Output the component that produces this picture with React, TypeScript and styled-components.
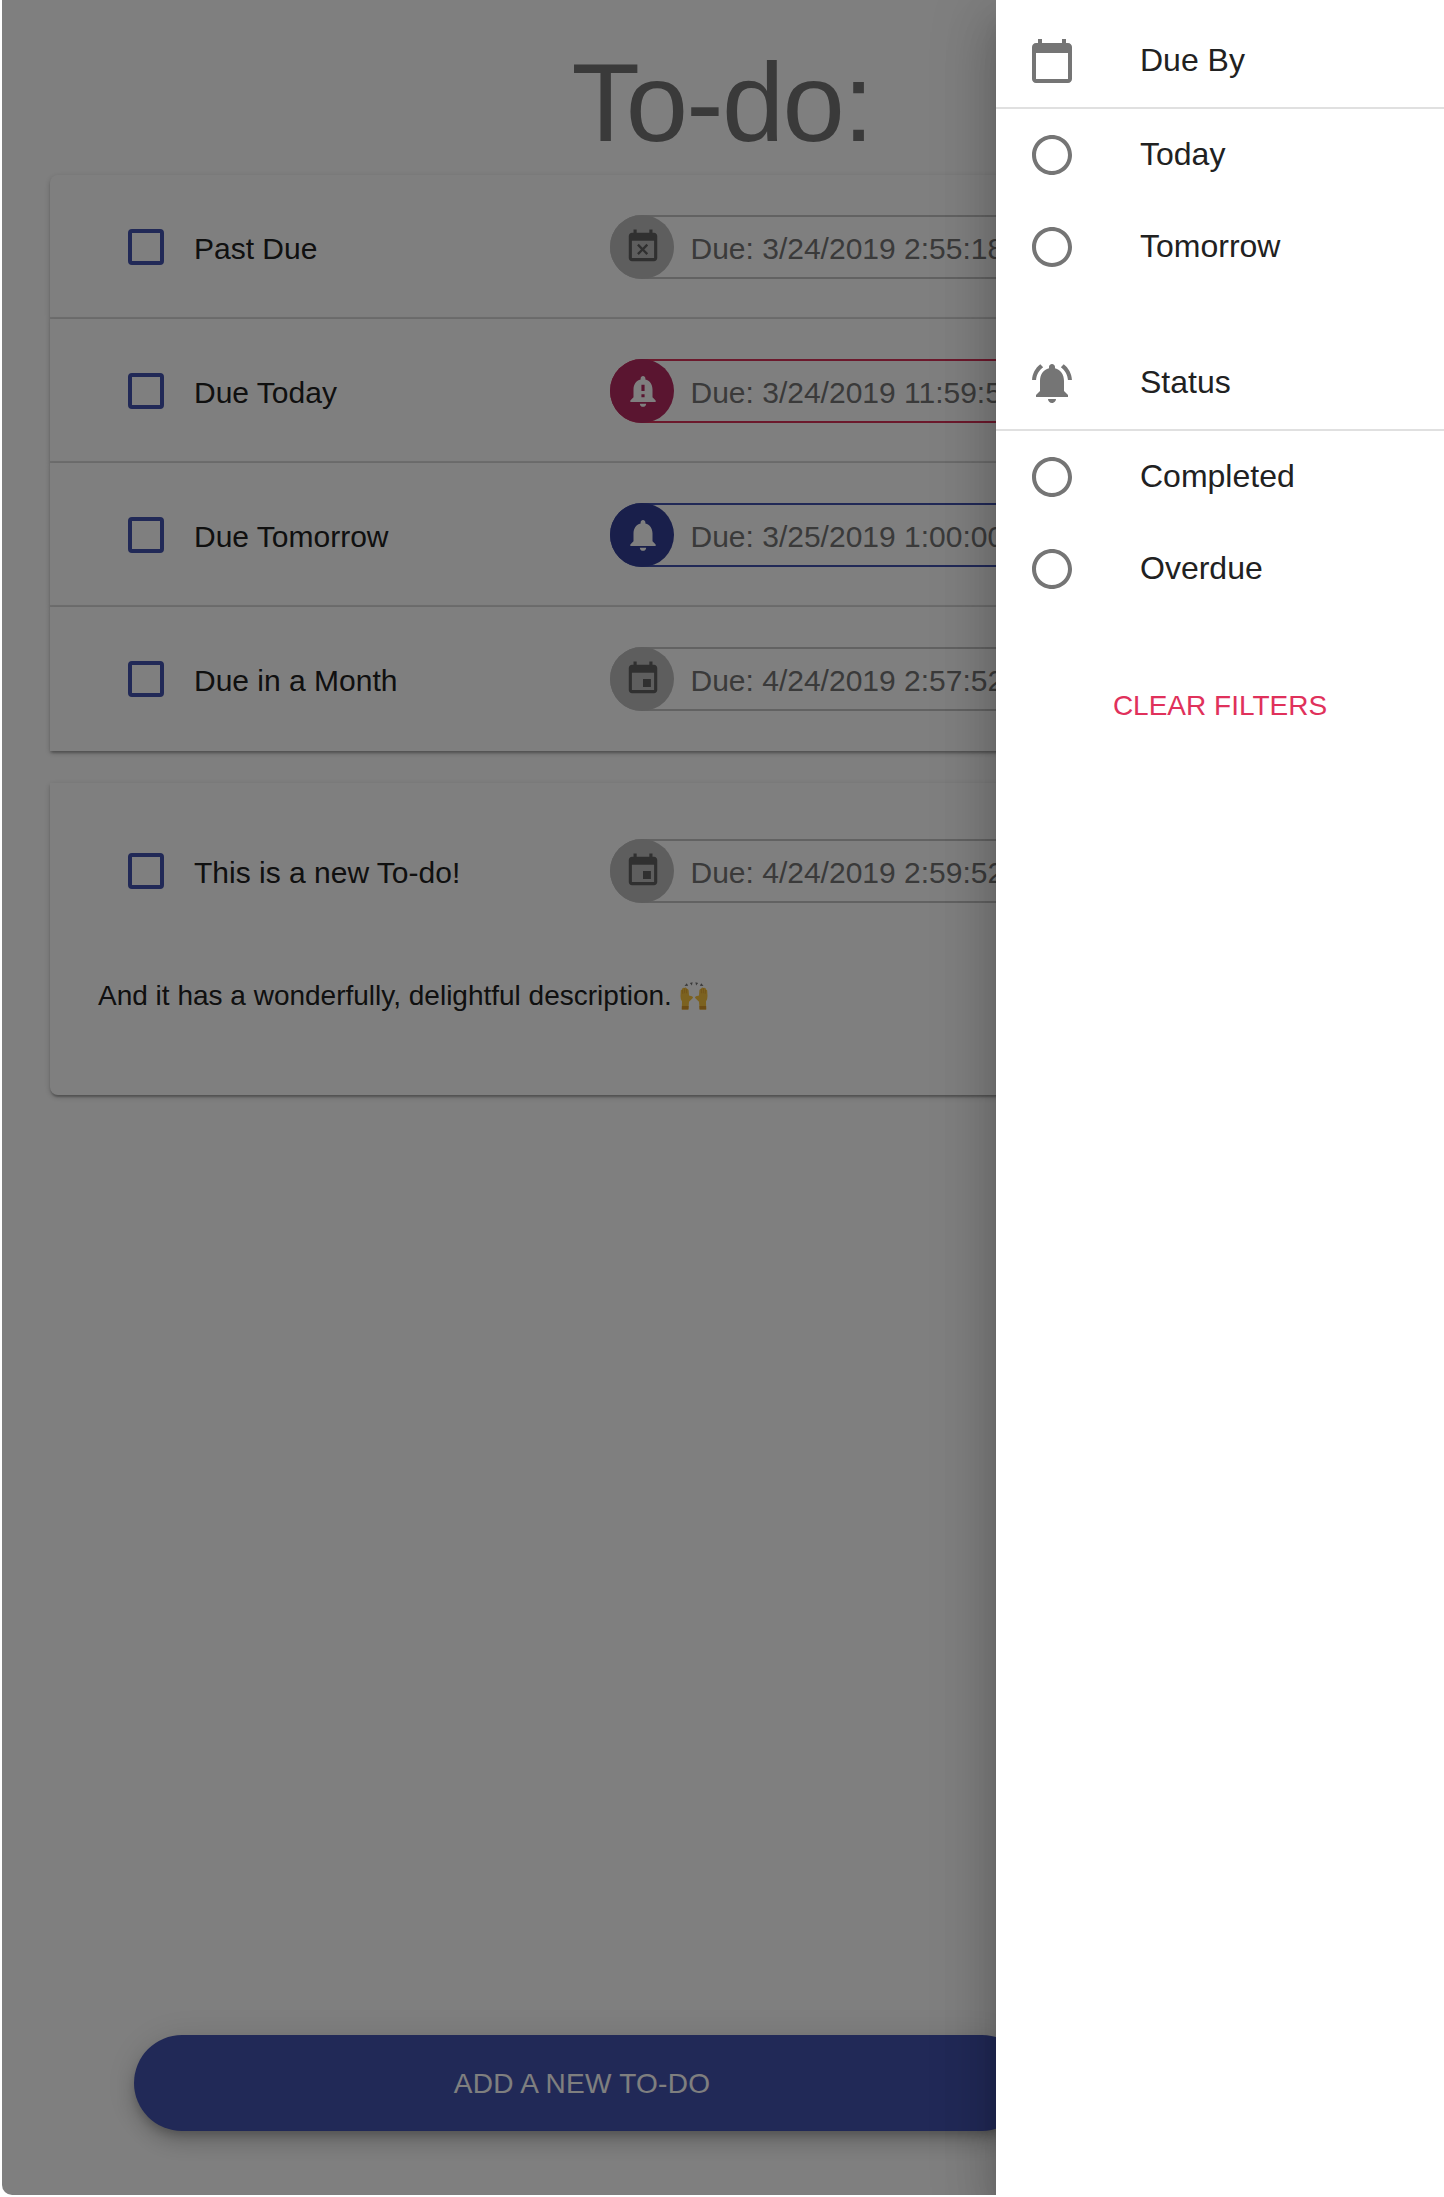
import React from 'react';
import styled, { createGlobalStyle } from 'styled-components';

const Global = createGlobalStyle`
  *, *::before, *::after { box-sizing: border-box; }
  body { margin: 0; background: #fff; font-family: "Liberation Sans", Arial, Helvetica, sans-serif; }
`;

const icons = {
  busy: 'M9.31 17l2.44-2.44L14.19 17l1.06-1.06-2.44-2.44 2.44-2.44L14.19 10l-2.44 2.44L9.31 10l-1.06 1.06 2.44 2.44-2.44 2.44L9.31 17zM19 3h-1V1h-2v2H8V1H6v2H5c-1.11 0-1.99.9-1.99 2L3 19c0 1.1.89 2 2 2h14c1.1 0 2-.9 2-2V5c0-1.1-.9-2-2-2zm0 16H5V8h14v11z',
  important: 'M18 16v-5c0-3.07-1.64-5.64-4.5-6.32V4c0-.83-.67-1.5-1.5-1.5s-1.5.67-1.5 1.5v.68C7.63 5.36 6 7.92 6 11v5l-2 2v1h16v-1l-2-2zm-5 0h-2v-2h2v2zm0-4h-2V8h2v4zm-1 10c1.1 0 2-.9 2-2h-4c0 1.1.89 2 2 2z',
  bell: 'M12 22c1.1 0 2-.9 2-2h-4c0 1.1.89 2 2 2zm6-6v-5c0-3.07-1.64-5.64-4.5-6.32V4c0-.83-.67-1.5-1.5-1.5s-1.5.67-1.5 1.5v.68C7.63 5.36 6 7.92 6 11v5l-2 2v1h16v-1l-2-2z',
  event: 'M17 12h-5v5h5v-5zM16 1v2H8V1H6v2H5c-1.11 0-1.99.9-1.99 2L3 19c0 1.1.89 2 2 2h14c1.1 0 2-.9 2-2V5c0-1.1-.9-2-2-2h-1V1h-2zm3 18H5V8h14v11z',
  calendar: 'M20 3h-1V1h-2v2H7V1H5v2H4c-1.1 0-2 .9-2 2v16c0 1.1.9 2 2 2h16c1.1 0 2-.9 2-2V5c0-1.1-.9-2-2-2zm0 18H4V8h16v13z',
  active: 'M7.58 4.08L6.15 2.65C3.75 4.48 2.17 7.3 2.03 10.5h2c.15-2.65 1.51-4.97 3.55-6.42zm12.39 6.42h2c-.15-3.2-1.73-6.02-4.12-7.85l-1.42 1.43c2.02 1.45 3.39 3.77 3.54 6.42zM18 11c0-3.07-1.64-5.64-4.5-6.32V4c0-.83-.67-1.5-1.5-1.5s-1.5.67-1.5 1.5v.68C7.63 5.36 6 7.92 6 11v5l-2 2v1h16v-1l-2-2v-5zm-6 11c.14 0 .27-.01.4-.04.65-.14 1.18-.58 1.44-1.18.1-.24.15-.5.15-.78h-4c.01 1.1.9 2 2.01 2z',
  radio: 'M12 2C6.48 2 2 6.48 2 12s4.48 10 10 10 10-4.48 10-10S17.52 2 12 2zm0 18c-4.42 0-8-3.58-8-8s3.58-8 8-8 8 3.58 8 8-3.58 8-8 8z',
};

const Icon = ({ name, size }: { name: keyof typeof icons; size: number }) => (
  <svg width={size} height={size} viewBox="0 0 24 24" fill="currentColor">
    <path d={icons[name]} />
  </svg>
);

const tones = {
  plain: { border: '#c4c4c4', avatar: '#bdbdbd', ink: '#616161' },
  urgent: { border: '#d93359', avatar: '#b42a60', ink: '#ffffff' },
  soon: { border: '#4252ae', avatar: '#333f96', ink: '#ffffff' },
};

const Viewport = styled.div`
  position: relative;
  width: 1444px;
  height: 2197px;
  overflow: hidden;
  display: flex;
`;

const Page = styled.main`
  flex: 1;
  margin: 0 2px 2px;
  padding: 0 48px 64px;
  display: flex;
  flex-direction: column;
  border-radius: 0 0 10px 10px;
`;

const Title = styled.h1`
  margin: 0;
  height: 175px;
  padding-top: 37px;
  font-size: 112px;
  font-weight: 400;
  line-height: 132px;
  letter-spacing: -1.7px;
  text-align: center;
  color: #757575;
`;

const List = styled.div`
  display: flex;
  flex-direction: column;
`;

const Panel = styled.section<{ $first?: boolean; $open?: boolean }>`
  background: #fff;
  margin-top: ${(p) => (p.$open ? 32 : 0)}px;
  border-radius: ${(p) => (p.$first ? '8px 8px 0 0' : p.$open ? '0 0 8px 8px' : '0')};
  box-shadow: 0 2px 6px rgba(0, 0, 0, 0.2), 0 2px 2px rgba(0, 0, 0, 0.14), 0 4px 2px -2px rgba(0, 0, 0, 0.12);
`;

const Summary = styled.div<{ $open?: boolean; $line: boolean }>`
  display: flex;
  align-items: center;
  height: ${(p) => (p.$open ? 176 : 144)}px;
  padding-left: 78px;
  border-bottom: 2px solid ${(p) => (p.$line ? '#dedede' : 'transparent')};
  padding-top: 2px;
`;

const Checkbox = styled.span`
  width: 36px;
  height: 36px;
  border: 4px solid #4252ae;
  border-radius: 4px;
`;

const Label = styled.span`
  width: 416px;
  margin: 4px 0 0 30px;
  font-size: 30px;
  line-height: 36px;
  color: #212121;
`;

const Chip = styled.div<{ $tone: keyof typeof tones }>`
  display: flex;
  align-items: center;
  height: 64px;
  width: 470px;
  border: 2px solid ${(p) => tones[p.$tone].border};
  border-radius: 32px;
`;

const Avatar = styled.span<{ $tone: keyof typeof tones }>`
  display: flex;
  align-items: center;
  justify-content: center;
  flex: none;
  width: 64px;
  height: 64px;
  margin-left: -2px;
  border-radius: 50%;
  background: ${(p) => tones[p.$tone].avatar};
  color: ${(p) => tones[p.$tone].ink};
  svg { margin-left: 1px; }
`;

const DueText = styled.span`
  margin: 4px 0 0 16.5px;
  font-size: 30px;
  line-height: 36px;
  white-space: nowrap;
  color: #757575;
`;

const Details = styled.div`
  display: flex;
  align-items: flex-start;
  height: 136px;
  padding: 17px 48px 47px;
`;

const Description = styled.p`
  display: flex;
  align-items: center;
  gap: 8px;
  margin: 0;
  font-size: 28px;
  line-height: 40px;
  color: #212121;
`;

const AddButton = styled.button`
  width: 896px;
  height: 96px;
  margin: auto 0 0 84px;
  border: 0;
  border-radius: 48px;
  background: #4252ae;
  color: #fff;
  font: 400 28px/49px "Liberation Sans", Arial, sans-serif;
  letter-spacing: 0.25px;
  text-transform: uppercase;
  box-shadow: 0 6px 10px -2px rgba(0, 0, 0, 0.2), 0 12px 20px rgba(0, 0, 0, 0.14), 0 2px 36px rgba(0, 0, 0, 0.12);
`;

const Backdrop = styled.div`
  position: absolute;
  inset: 0 0 2px 2px;
  display: flex;
  justify-content: flex-end;
  overflow: hidden;
  border-radius: 0 0 0 10px;
  background: rgba(0, 0, 0, 0.5);
`;

const Drawer = styled.aside`
  width: 448px;
  height: 100%;
  padding-top: 15px;
  display: flex;
  flex-direction: column;
  background: #fff;
  box-shadow: 0 16px 20px -10px rgba(0, 0, 0, 0.2), 0 32px 48px 4px rgba(0, 0, 0, 0.14), 0 12px 60px 10px rgba(0, 0, 0, 0.12);
`;

const Group = styled.div`
  display: flex;
  flex-direction: column;
  margin-bottom: 44px;
`;

const Item = styled.div<{ $header?: boolean }>`
  display: flex;
  align-items: center;
  gap: 64px;
  height: ${(p) => (p.$header ? 94 : 92)}px;
  padding-left: 32px;
  border-bottom: ${(p) => (p.$header ? '2px solid #e0e0e0' : '0')};
  color: #757575;
`;

const ItemText = styled.span`
  margin-top: -2px;
  font-size: 32px;
  line-height: 48px;
  color: #212121;
`;

const ClearButton = styled.button`
  align-self: center;
  margin-top: 11px;
  height: 72px;
  padding: 0 16px;
  border: 0;
  background: none;
  color: #e0315b;
  font: 400 28px/48px "Liberation Sans", Arial, sans-serif;
  text-transform: uppercase;
`;

const RaisedHands = () => (
  <svg width="28" height="30" viewBox="0 0 28 30" role="img" aria-label="raised hands">
    <g fill="#757575">
      <path d="M4.500 5l2.200-2.800 1.500 2.600zM9.800 2l2.800-.7-.7 3.200zM15.400 1.300l2.800.7-2.100 2.500zM19.800 4.800l1.500-2.600 2.200 2.800z" />
    </g>
    <g fill="#f9c440">
      <path d="M.5 15L.8 9.500Q1 8.400 1.900 8.800L2.400 7.300Q3.300 6.200 4.200 7.100L5.300 6.600Q6.300 6.500 6.600 7.600L8 8.200Q8.700 8.800 8.700 10L9 14.500 12 15.200Q13.800 16 12.600 17.200L9 20.800 8.400 28.500H1.800L2 20.500Q.4 18 .5 15z" />
      <path d="M27.500 15l-.3-5.500Q27 8.400 26.100 8.800L25.600 7.300Q24.700 6.200 23.800 7.100L22.700 6.600Q21.700 6.500 21.400 7.600L20 8.200Q19.300 8.800 19.300 10L19 14.500 16 15.200Q14.200 16 15.400 17.200L19 20.800 19.600 28.500h6.600L26 20.500Q27.600 18 27.500 15z" />
    </g>
    <path fill="#d9992b" d="M1.900 25h6.700l-.2 3.500H1.800zM19.400 25h6.700l.1 3.500h-6.600z" />
    <path fill="none" stroke="#d9992b" strokeWidth=".6" d="M2.500 8.800l.3 4M4.500 7.300l.2 5M6.600 7.800v4.500M25.500 8.800l-.3 4M23.500 7.300l-.2 5M21.400 7.800v4.500" />
  </svg>
);

type Todo = { label: string; due: string; icon: keyof typeof icons; tone: keyof typeof tones };

const todos: Todo[] = [
  { label: 'Past Due', due: '3/24/2019 2:55:18 PM', icon: 'busy', tone: 'plain' },
  { label: 'Due Today', due: '3/24/2019 11:59:59 PM', icon: 'important', tone: 'urgent' },
  { label: 'Due Tomorrow', due: '3/25/2019 1:00:00 PM', icon: 'bell', tone: 'soon' },
  { label: 'Due in a Month', due: '4/24/2019 2:57:52 PM', icon: 'event', tone: 'plain' },
];

const newTodo: Todo = { label: 'This is a new To-do!', due: '4/24/2019 2:59:52 PM', icon: 'event', tone: 'plain' };

const TodoSummary = ({ todo, open, line = false }: { todo: Todo; open?: boolean; line?: boolean }) => (
  <Summary $open={open} $line={line}>
    <Checkbox />
    <Label>{todo.label}</Label>
    <Chip $tone={todo.tone}>
      <Avatar $tone={todo.tone}>
        <Icon name={todo.icon} size={38} />
      </Avatar>
      <DueText>Due: {todo.due}</DueText>
    </Chip>
  </Summary>
);

const filters: { title: string; icon: keyof typeof icons; options: string[] }[] = [
  { title: 'Due By', icon: 'calendar', options: ['Today', 'Tomorrow'] },
  { title: 'Status', icon: 'active', options: ['Completed', 'Overdue'] },
];

export default function App() {
  return (
    <Viewport>
      <Global />
      <Page>
        <Title>To-do:</Title>
        <List>
          {todos.map((t, i) => (
            <Panel key={t.label} $first={i === 0}>
              <TodoSummary todo={t} line={i < todos.length - 1} />
            </Panel>
          ))}
          <Panel $open>
            <TodoSummary todo={newTodo} open />
            <Details>
              <Description>
                And it has a wonderfully, delightful description.
                <RaisedHands />
              </Description>
            </Details>
          </Panel>
        </List>
        <AddButton>Add a new to-do</AddButton>
      </Page>
      <Backdrop>
        <Drawer>
          {filters.map((g) => (
            <Group key={g.title}>
              <Item $header>
                <Icon name={g.icon} size={48} />
                <ItemText>{g.title}</ItemText>
              </Item>
              {g.options.map((o) => (
                <Item key={o}>
                  <Icon name="radio" size={48} />
                  <ItemText>{o}</ItemText>
                </Item>
              ))}
            </Group>
          ))}
          <ClearButton>Clear filters</ClearButton>
        </Drawer>
      </Backdrop>
    </Viewport>
  );
}
